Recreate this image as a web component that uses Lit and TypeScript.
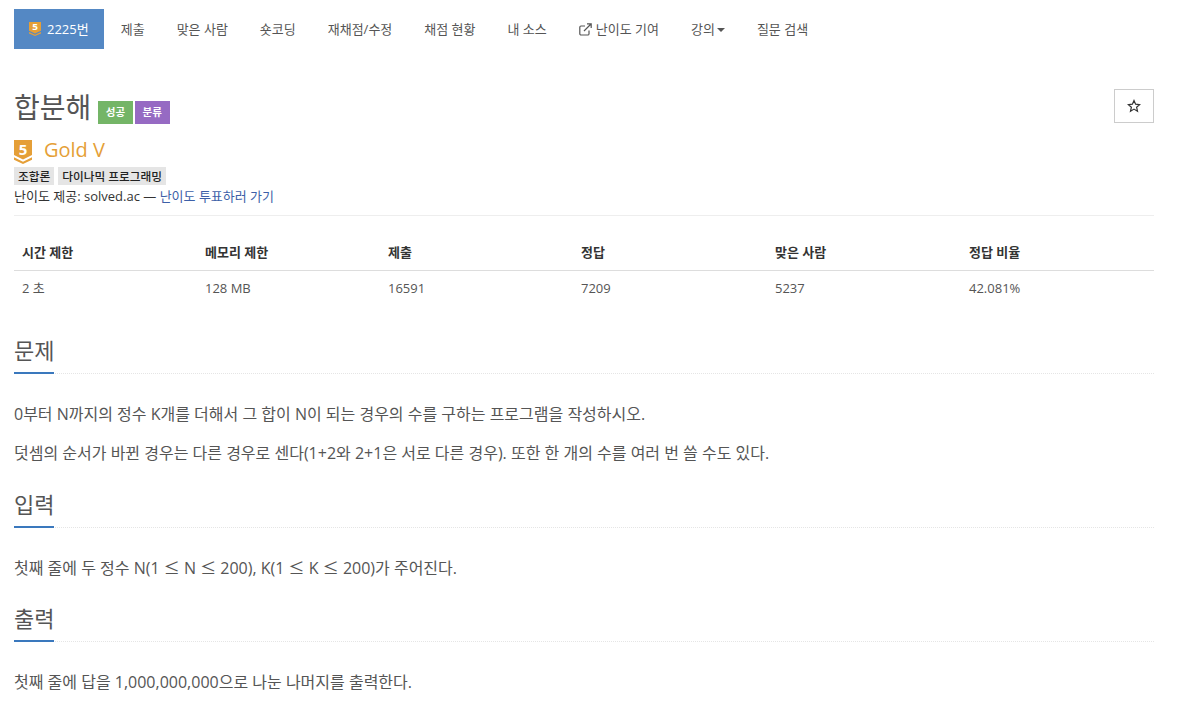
import { LitElement, html, css } from "lit";
import { customElement } from "lit/decorators.js";

const tierIcon = (w: number, h: number) => html`<svg width=${w} height=${h} viewBox="0 0 18 24" preserveAspectRatio="none">
  <path d="M0 0H18V15L9 19.5L0 15Z" fill="#e59f37"/>
  <path d="M0 17.2L9 21.7L18 17.2V19.7L9 24L0 19.7Z" fill="#e59f37"/>
  <text x="9" y="14.5" text-anchor="middle" font-family="'Open Sans',sans-serif" font-weight="700" font-size="15" fill="#fff">5</text>
</svg>`;

const cols = [183, 183, 193, 194, 194, 193];

@customElement("app-root")
export class AppRoot extends LitElement {
  static styles = css`
    :host { display: block; font-family: "Open Sans", "Noto Sans CJK KR", sans-serif; color: #555; font-size: 13px; background: #fff; height: 712px; overflow: hidden; }
    .page { padding: 9px 27px 0 14px; }
    nav { display: flex; height: 40px; gap: 2px; margin-bottom: 40px; line-height: 20px; }
    nav a { display: flex; align-items: center; padding: 0 15px; color: #555; white-space: nowrap; }
    nav a.active { background: #5488c4; color: #fff; }
    nav a.active svg { margin-right: 6px; }
    nav a .ext { margin-right: 4px; }
    .caret { display: inline-block; width: 0; height: 0; border-left: 4px solid transparent; border-right: 4px solid transparent; border-top: 4px solid #555; margin-left: 2px; margin-top: 2px; }
    .head { display: flex; justify-content: space-between; align-items: flex-start; }
    h1 { margin: 0; font-size: 28px; font-weight: 400; line-height: 33px; color: #555; display: flex; align-items: flex-end; height: 35px; }
    .label { display: inline-block; font-size: 10.5px; font-weight: 700; color: #fff; height: 23px; line-height: 23px; padding: 0 7.5px; margin-left: 2.5px; }
    .label.first { margin-left: 7px; }
    .label.green { background: #74b567; }
    .label.purple { background: #966ac3; padding-right: 8px; }
    .star { width: 40px; height: 34px; box-sizing: border-box; border: 1px solid #ccc; display: flex; align-items: center; justify-content: center; color: #333; }
    .tier { display: flex; align-items: center; height: 24px; margin-top: 16px; font-size: 20px; color: #e59f37; }
    .tier svg { margin-right: 12px; }
    .tier span { margin-top: -5px; }
    .tags { display: flex; gap: 4px; margin-top: 3px; height: 18px; }
    .tag { background: #e5e5e5; color: #222; font-size: 11.7px; font-weight: 500; line-height: 18px; padding: 0 4px; }
    .prov { color: #333; font-size: 13px; line-height: 20px; margin-top: 1px; padding-bottom: 9px; border-bottom: 1px solid #eee; }
    .prov a { color: #3d5fa8; }
    table { width: 100%; margin-top: 20px; border-collapse: collapse; table-layout: fixed; color: #333; font-size: 13px; }
    th { text-align: left; font-weight: 700; font-size: 13px; padding: 7px 8px 9px; line-height: 18px; border-bottom: 1px solid #ddd; }
    td { padding: 8px; line-height: 18px; color: #555; }
    section h2 { margin: 0; font-size: 22px; font-weight: 400; line-height: 24px; color: #555; padding-bottom: 11px; border-bottom: 1px dotted #e5e5e5; position: relative; }
    section h2::after { content: ""; position: absolute; left: 0; bottom: -1px; width: 40px; height: 2px; background: #3a78bd; }
    section p { margin: 0 0 15px; font-size: 16px; line-height: 24px; color: #555; }
    .sec1 { margin-top: 33px; }
    .sec2 { margin-top: 27px; }
    .sec3 { margin-top: 26px; }
    .body { padding-top: 28px; }
    .sec2 .body { padding-top: 27px; }
    .wide { font-family: "Noto Sans CJK KR", sans-serif; }
  `;

  render() {
    const le = html`<span class="wide">≤</span>`;
    return html`<div class="page">
      <nav>
        <a class="active">${tierIcon(12, 14)}2225번</a>
        <a>제출</a><a>맞은 사람</a><a>숏코딩</a><a>재채점/수정</a><a>채점 현황</a><a>내 소스</a>
        <a><svg class="ext" width="13" height="13" viewBox="0 0 13 13" fill="none" stroke="#555" stroke-width="1.2"><path d="M10 7.5V11a1.2 1.2 0 0 1-1.2 1H2a1.2 1.2 0 0 1-1.2-1.2V4.2A1.2 1.2 0 0 1 2 3h4"/><path d="M5 8L12 1M8 .8h4.2V5"/></svg>난이도 기여</a>
        <a>강의<span class="caret"></span></a>
        <a>질문 검색</a>
      </nav>
      <div class="head">
        <h1>합분해<span class="label first green">성공</span><span class="label purple">분류</span></h1>
        <div class="star"><svg width="14" height="14" viewBox="0 0 14 14" fill="none" stroke="#333" stroke-width="1.2"><path d="M7 1.5L8.6 5.2L12.6 5.6L9.6 8.2L10.5 12.2L7 10.1L3.5 12.2L4.4 8.2L1.4 5.6L5.4 5.2Z"/></svg></div>
      </div>
      <div class="tier">${tierIcon(18, 24)}<span>Gold V</span></div>
      <div class="tags"><span class="tag">조합론</span><span class="tag">다이나믹 프로그래밍</span></div>
      <div class="prov">난이도 제공: solved.ac — <a>난이도 투표하러 가기</a></div>
      <table>
        <colgroup>${cols.map((w) => html`<col style="width:${w}px" />`)}</colgroup>
        <thead><tr><th>시간 제한</th><th>메모리 제한</th><th>제출</th><th>정답</th><th>맞은 사람</th><th>정답 비율</th></tr></thead>
        <tbody><tr><td>2 초</td><td>128 MB</td><td>16591</td><td>7209</td><td>5237</td><td>42.081%</td></tr></tbody>
      </table>
      <section class="sec1"><h2>문제</h2><div class="body">
        <p>0부터 N까지의 정수 K개를 더해서 그 합이 N이 되는 경우의 수를 구하는 프로그램을 작성하시오.</p>
        <p>덧셈의 순서가 바뀐 경우는 다른 경우로 센다(1+2와 2+1은 서로 다른 경우). 또한 한 개의 수를 여러 번 쓸 수도 있다.</p>
      </div></section>
      <section class="sec2"><h2>입력</h2><div class="body">
        <p>첫째 줄에 두 정수 N(1 ${le} N ${le} 200), K(1 ${le} K ${le} 200)가 주어진다.</p>
      </div></section>
      <section class="sec3"><h2>출력</h2><div class="body">
        <p>첫째 줄에 답을 1,000,000,000으로 나눈 나머지를 출력한다.</p>
      </div></section>
    </div>`;
  }
}
